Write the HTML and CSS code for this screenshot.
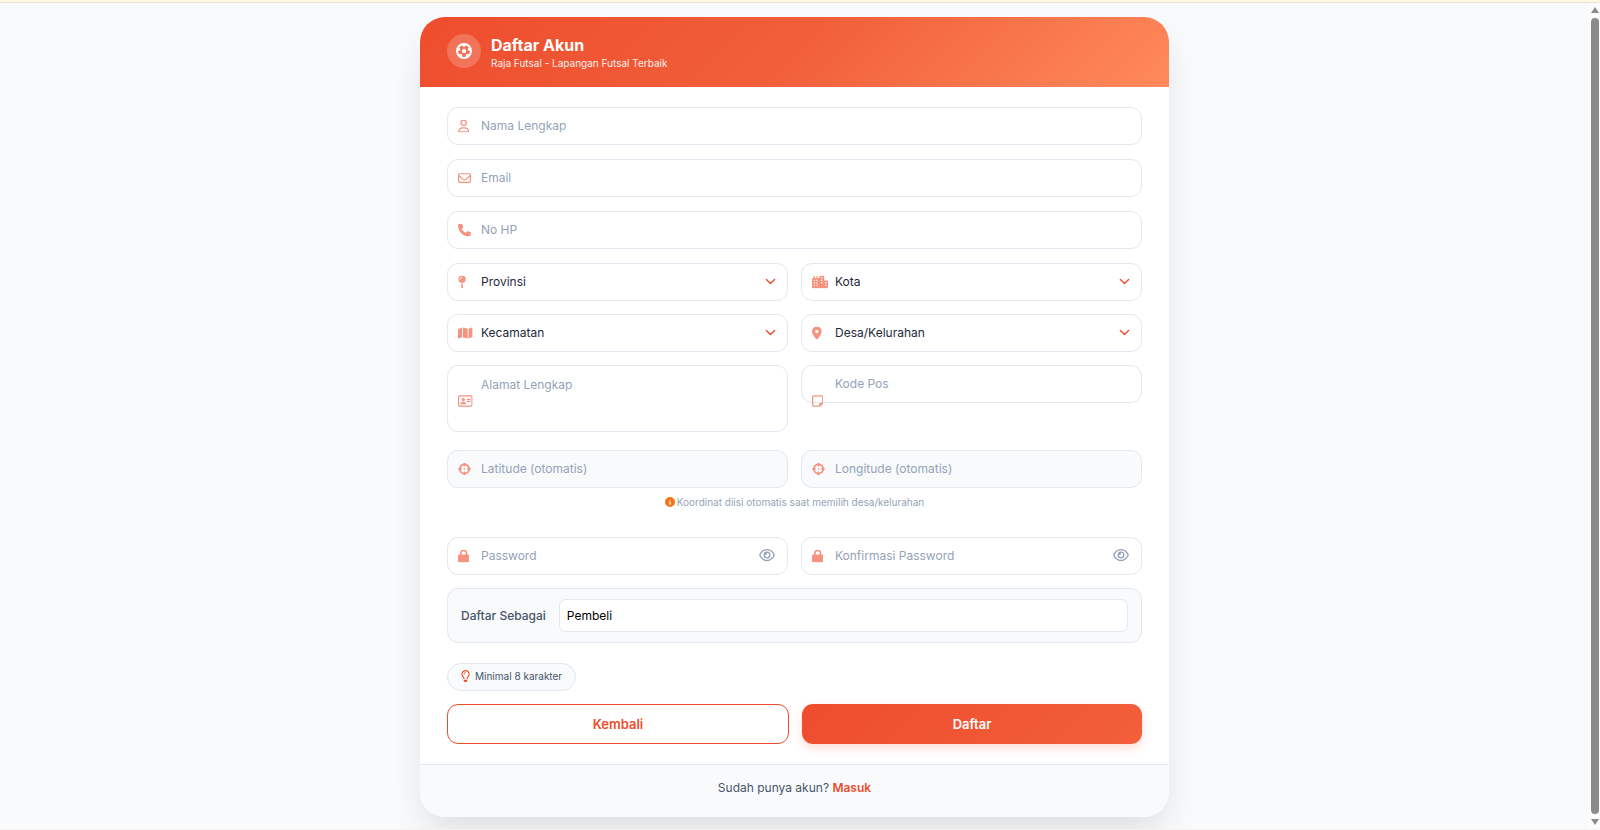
FILE: index.html
```html
<!DOCTYPE html>
<html lang="id">
<head>
    <meta charset="UTF-8">
    <meta name="viewport" content="width=device-width, initial-scale=1.0">
    <link rel="stylesheet" href="styles.css">
    <title>Daftar Akun</title>
</head>
<body>
    <!-- Icons -->
    <svg class="sprite" aria-hidden="true">
        <symbol id="futbol" viewBox="0 0 512 512"><path fill-rule="evenodd" d="M256 512A256 256 0 1 0 256 0a256 256 0 1 0 0 512zM417.3 360.1l-71.6-4.8c-5.2-.3-10.3 1.1-14.5 4.2s-7.2 7.4-8.4 12.5l-17.6 69.6C289.5 445.8 273 448 256 448s-33.5-2.2-49.2-6.4L189.2 372c-1.3-5-4.3-9.4-8.4-12.5s-9.3-4.5-14.5-4.2l-71.6 4.8c-17.6-27.2-28.5-59.2-30.4-93.6L125 228.3c4.4-2.8 7.6-7 9.2-11.9s1.4-10.2-.5-15l-26.7-66.6C128 109.2 155.3 89 186.9 76.9l55.2 46c4 3.3 9 5.1 14.1 5.1s10.2-1.8 14.1-5.1l55.2-46c31.6 12.1 58.9 32.3 79.9 57.9l-26.7 66.6c-1.9 4.8-2.1 10.1-.5 15s4.9 9.1 9.2 11.9l60.7 38.2c-1.9 34.4-12.8 66.4-30.4 93.6zM270.1 186.3c-8.4-6.1-19.8-6.1-28.2 0L194 221c-8.4 6.1-11.9 16.9-8.7 26.8l18.3 56.3c3.2 9.9 12.4 16.6 22.8 16.6h59.2c10.4 0 19.6-6.7 22.8-16.6l18.3-56.3c3.2-9.9-.3-20.7-8.7-26.8l-47.9-34.8z"/></symbol>
        <symbol id="user" viewBox="0 0 448 512"><path d="M304 128a80 80 0 1 0 -160 0 80 80 0 1 0 160 0zM96 128a128 128 0 1 1 256 0A128 128 0 1 1 96 128zM49.3 464H398.7c-8.9-63.3-63.3-112-129-112H178.3c-65.7 0-120.1 48.7-129 112zM0 482.3C0 383.8 79.8 304 178.3 304h91.4C368.2 304 448 383.8 448 482.3c0 16.4-13.3 29.7-29.7 29.7H29.7C13.3 512 0 498.7 0 482.3z"/></symbol>
        <symbol id="envelope" viewBox="0 0 512 512"><path d="M64 112c-8.8 0-16 7.2-16 16v22.1L220.5 291.7c20.7 17 50.4 17 71.1 0L464 150.1V128c0-8.8-7.2-16-16-16H64zM48 212.2V384c0 8.8 7.2 16 16 16H448c8.8 0 16-7.2 16-16V212.2L322 328.8c-38.4 31.5-93.7 31.5-132 0L48 212.2zM0 128C0 92.7 28.7 64 64 64H448c35.3 0 64 28.7 64 64V384c0 35.3-28.7 64-64 64H64c-35.3 0-64-28.7-64-64V128z"/></symbol>
        <symbol id="phone" viewBox="0 0 512 512"><path d="M164.9 24.6c-7.7-18.6-28-28.5-47.4-23.2l-88 24C12.1 30.2 0 46 0 64C0 311.4 200.6 512 448 512c18 0 33.8-12.1 38.6-29.5l24-88c5.3-19.4-4.6-39.7-23.2-47.4l-96-40c-16.3-6.8-35.2-2.1-46.3 11.6L304.7 368C234.3 334.7 177.3 277.7 144 207.3L193.3 167c13.7-11.2 18.4-30 11.6-46.3l-40-96z"/></symbol>
        <symbol id="pin" viewBox="0 0 320 512"><path d="M16 144a144 144 0 1 1 288 0A144 144 0 1 1 16 144zM160 80c8.8 0 16-7.2 16-16s-7.2-16-16-16c-53 0-96 43-96 96c0 8.8 7.2 16 16 16s16-7.2 16-16c0-35.3 28.7-64 64-64zM128 480V317.1c10.4 1.9 21.1 2.9 32 2.9s21.6-1 32-2.9V480c0 17.7-14.3 32-32 32s-32-14.3-32-32z"/></symbol>
        <symbol id="city" viewBox="0 0 640 512"><path fill-rule="evenodd" d="M480 48c0-26.5-21.5-48-48-48H336c-26.5 0-48 21.5-48 48V96H224V24c0-13.3-10.7-24-24-24s-24 10.7-24 24V96H112V24c0-13.3-10.7-24-24-24S64 10.7 64 24V96H48C21.5 96 0 117.5 0 144V464c0 26.5 21.5 48 48 48H592c26.5 0 48-21.5 48-48V240c0-26.5-21.5-48-48-48H480V48zM72 168h48v48H72zM168 168h48v48h-48zM72 264h48v48H72zM168 264h48v48h-48zM72 360h48v48H72zM168 360h48v48h-48zM360 72h48v48h-48zM360 168h48v48h-48zM360 264h48v48h-48zM520 264h48v48h-48zM520 360h48v48h-48z"/></symbol>
        <symbol id="map" viewBox="0 0 576 512"><path d="M384 476.1L192 421.2V35.9L384 90.8V476.1zm32-1.2V88.4L543.1 37.5c15.8-6.3 32.9 5.3 32.9 22.3V394.6c0 9.8-6 18.6-15.1 22.3L416 474.8zM15.1 95.1L160 37.2V423.6L32.9 474.5C17.1 480.8 0 469.2 0 452.2V117.4c0-9.8 6-18.6 15.1-22.3z"/></symbol>
        <symbol id="location" viewBox="0 0 384 512"><path d="M215.7 499.2C267 435 384 279.4 384 192C384 86 298 0 192 0S0 86 0 192c0 87.4 117 243 168.3 307.2c12.3 15.3 35.1 15.3 47.4 0zM192 128a64 64 0 1 1 0 128 64 64 0 1 1 0-128z"/></symbol>
        <symbol id="card" viewBox="0 0 576 512"><rect x="24" y="56" width="528" height="400" rx="40" fill="none" stroke="currentColor" stroke-width="48"/><circle cx="208" cy="200" r="64"/><path d="M96 373c0-47 38-85 85-85h54c47 0 85 38 85 85 0 6-5 11-11 11H107c-6 0-11-5-11-11z"/><path d="M368 192h112M368 272h112" stroke="currentColor" stroke-width="44" stroke-linecap="round"/></symbol>
        <symbol id="note" viewBox="0 0 448 512"><path d="M64 80c-8.8 0-16 7.2-16 16V416c0 8.8 7.2 16 16 16H288V352c0-17.7 14.3-32 32-32h80V96c0-8.8-7.2-16-16-16H64zM288 480H64c-35.3 0-64-28.7-64-64V96C0 60.7 28.7 32 64 32H384c35.3 0 64 28.7 64 64V320v5.5c0 17-6.7 33.3-18.7 45.3l-90.5 90.5c-12 12-28.3 18.7-45.3 18.7H288z"/></symbol>
        <symbol id="crosshairs" viewBox="0 0 512 512"><path d="M256 0c17.7 0 32 14.3 32 32V42.4c93.7 13.9 167.7 88 181.6 181.6H480c17.7 0 32 14.3 32 32s-14.3 32-32 32H469.6c-13.9 93.7-88 167.7-181.6 181.6V480c0 17.7-14.3 32-32 32s-32-14.3-32-32V469.6C130.3 455.7 56.3 381.7 42.4 288H32c-17.7 0-32-14.3-32-32s14.3-32 32-32H42.4C56.3 130.3 130.3 56.3 224 42.4V32c0-17.7 14.3-32 32-32zM107.4 288c12.5 58.3 58.4 104.1 116.6 116.6V384c0-17.7 14.3-32 32-32s32 14.3 32 32v20.6c58.3-12.5 104.1-58.4 116.6-116.6H384c-17.7 0-32-14.3-32-32s14.3-32 32-32h20.6C392.1 165.7 346.3 119.9 288 107.4V128c0 17.7-14.3 32-32 32s-32-14.3-32-32V107.4C165.7 119.9 119.9 165.7 107.4 224H128c17.7 0 32 14.3 32 32s-14.3 32-32 32H107.4zM256 224a32 32 0 1 1 0 64 32 32 0 1 1 0-64z"/></symbol>
        <symbol id="lock" viewBox="0 0 448 512"><path d="M144 144v48H304V144c0-44.2-35.8-80-80-80s-80 35.8-80 80zM80 192V144C80 64.5 144.5 0 224 0s144 64.5 144 144v48h16c35.3 0 64 28.7 64 64V448c0 35.3-28.7 64-64 64H64c-35.3 0-64-28.7-64-64V256c0-35.3 28.7-64 64-64H80z"/></symbol>
        <symbol id="eye" viewBox="0 0 576 512"><path d="M288 80c-65.2 0-118.8 29.6-159.9 67.7C89.6 183.5 63 226 49.4 256c13.6 30 40.2 72.5 78.6 108.3C169.2 402.4 222.8 432 288 432s118.8-29.6 159.9-67.7C486.4 328.5 513 286 526.6 256c-13.6-30-40.2-72.5-78.6-108.3C406.8 109.6 353.2 80 288 80zM95.4 112.6C142.5 68.8 207.2 32 288 32s145.5 36.8 192.6 80.6c46.8 43.5 78.1 95.4 93 131.1c3.3 7.9 3.3 16.7 0 24.6c-14.9 35.7-46.2 87.7-93 131.1C433.5 443.2 368.8 480 288 480s-145.5-36.8-192.6-80.6C48.6 356 17.3 304 2.5 268.3c-3.3-7.9-3.3-16.7 0-24.6C17.3 208 48.6 156 95.4 112.6zM288 336c44.2 0 80-35.8 80-80s-35.8-80-80-80c-.7 0-1.3 0-2 0c1.3 5.1 2 10.5 2 16c0 35.3-28.7 64-64 64c-5.5 0-10.9-.7-16-2c0 .7 0 1.3 0 2c0 44.2 35.8 80 80 80zm0-208a128 128 0 1 1 0 256 128 128 0 1 1 0-256z"/></symbol>
        <symbol id="info" viewBox="0 0 512 512"><path d="M256 512A256 256 0 1 0 256 0a256 256 0 1 0 0 512zM216 336h24V272H216c-13.3 0-24-10.7-24-24s10.7-24 24-24h48c13.3 0 24 10.7 24 24v88h8c13.3 0 24 10.7 24 24s-10.7 24-24 24H216c-13.3 0-24-10.7-24-24s10.7-24 24-24zm40-208a32 32 0 1 1 0 64 32 32 0 1 1 0-64z"/></symbol>
        <symbol id="bulb" viewBox="0 0 384 512"><path d="M297.2 248.9C311.6 228.3 320 203.2 320 176c0-70.7-57.3-128-128-128S64 105.3 64 176c0 27.2 8.4 52.3 22.8 72.9c3.7 5.3 8.1 11.3 12.8 17.7c12.9 17.7 28.3 38.9 39.8 59.8c10.4 19 15.7 38.8 18.3 57.5H109c-2.2-12-5.9-23.7-11.8-34.5c-9.9-18-22.2-34.9-34.5-51.8c-5.2-7.1-10.4-14.2-15.4-21.4C27.6 247.9 16 213.3 16 176C16 78.8 94.8 0 192 0s176 78.8 176 176c0 37.3-11.6 71.9-31.4 100.3c-5 7.2-10.2 14.3-15.4 21.4c-12.3 16.8-24.6 33.7-34.5 51.8c-5.9 10.8-9.6 22.5-11.8 34.5H226.4c2.6-18.7 7.9-38.6 18.3-57.5c11.5-20.9 26.9-42.1 39.8-59.8c4.7-6.4 9-12.4 12.7-17.7zM192 128c-26.5 0-48 21.5-48 48c0 8.8-7.2 16-16 16s-16-7.2-16-16c0-44.2 35.8-80 80-80c8.8 0 16 7.2 16 16s-7.2 16-16 16zm0 384c-44.2 0-80-35.8-80-80V416H272v16c0 44.2-35.8 80-80 80z"/></symbol>
        <symbol id="chevron" viewBox="0 0 16 16"><path d="M2 5l6 6 6-6" fill="none" stroke="currentColor" stroke-width="2" stroke-linecap="round" stroke-linejoin="round"/></symbol>
    </svg>

    <div class="top-strip"></div>
    <div class="page">
        <main class="content">
            <div class="register-card">
                <div class="card-header">
                    <div class="logo"><svg><use href="#futbol"/></svg></div>
                    <div>
                        <h1>Daftar Akun</h1>
                        <p>Raja Futsal - Lapangan Futsal Terbaik</p>
                    </div>
                </div>

                <form class="card-body">
                    <div class="field full">
                        <input type="text" id="nama" placeholder="Nama Lengkap" aria-label="Nama Lengkap">
                        <label class="icon" for="nama"><svg viewBox="0 0 448 512"><use href="#user"/></svg></label>
                    </div>
                    <div class="field full">
                        <input type="email" id="email" placeholder="Email" aria-label="Email">
                        <label class="icon" for="email"><svg viewBox="0 0 512 512"><use href="#envelope"/></svg></label>
                    </div>
                    <div class="field full">
                        <input type="tel" id="hp" placeholder="No HP" aria-label="No HP">
                        <label class="icon" for="hp"><svg viewBox="0 0 512 512"><use href="#phone"/></svg></label>
                    </div>

                    <div class="row">
                        <div class="field">
                            <select id="provinsi" aria-label="Provinsi"><option>Provinsi</option></select>
                            <label class="icon" for="provinsi"><svg viewBox="0 0 320 512"><use href="#pin"/></svg></label>
                            <svg class="arrow"><use href="#chevron"/></svg>
                        </div>
                        <div class="field">
                            <select id="kota" aria-label="Kota"><option>Kota</option></select>
                            <label class="icon" for="kota"><svg viewBox="0 0 640 512"><use href="#city"/></svg></label>
                            <svg class="arrow"><use href="#chevron"/></svg>
                        </div>
                    </div>
                    <div class="row">
                        <div class="field">
                            <select id="kecamatan" aria-label="Kecamatan"><option>Kecamatan</option></select>
                            <label class="icon" for="kecamatan"><svg viewBox="0 0 576 512"><use href="#map"/></svg></label>
                            <svg class="arrow"><use href="#chevron"/></svg>
                        </div>
                        <div class="field">
                            <select id="desa" aria-label="Desa/Kelurahan"><option>Desa/Kelurahan</option></select>
                            <label class="icon" for="desa"><svg viewBox="0 0 384 512"><use href="#location"/></svg></label>
                            <svg class="arrow"><use href="#chevron"/></svg>
                        </div>
                    </div>
                    <div class="row">
                        <div class="field address">
                            <textarea id="alamat" placeholder="Alamat Lengkap" aria-label="Alamat Lengkap"></textarea>
                            <label class="icon" for="alamat"><svg viewBox="0 0 576 512"><use href="#card"/></svg></label>
                        </div>
                        <div class="field">
                            <input type="text" id="kodepos" placeholder="Kode Pos" aria-label="Kode Pos">
                            <label class="icon" for="kodepos"><svg viewBox="0 0 448 512"><use href="#note"/></svg></label>
                        </div>
                    </div>
                    <div class="row coordinates">
                        <div class="field">
                            <input type="text" id="lat" placeholder="Latitude (otomatis)" aria-label="Latitude" readonly>
                            <label class="icon" for="lat"><svg viewBox="0 0 512 512"><use href="#crosshairs"/></svg></label>
                        </div>
                        <div class="field">
                            <input type="text" id="lng" placeholder="Longitude (otomatis)" aria-label="Longitude" readonly>
                            <label class="icon" for="lng"><svg viewBox="0 0 512 512"><use href="#crosshairs"/></svg></label>
                        </div>
                    </div>
                    <p class="hint"><svg><use href="#info"/></svg>Koordinat diisi otomatis saat memilih desa/kelurahan</p>
                    <div class="row">
                        <div class="field">
                            <input type="password" id="password" placeholder="Password" aria-label="Password">
                            <label class="icon" for="password"><svg viewBox="0 0 448 512"><use href="#lock"/></svg></label>
                            <button type="button" class="toggle" aria-label="Lihat password"><svg><use href="#eye"/></svg></button>
                        </div>
                        <div class="field">
                            <input type="password" id="konfirmasi" placeholder="Konfirmasi Password" aria-label="Konfirmasi Password">
                            <label class="icon" for="konfirmasi"><svg viewBox="0 0 448 512"><use href="#lock"/></svg></label>
                            <button type="button" class="toggle" aria-label="Lihat password"><svg><use href="#eye"/></svg></button>
                        </div>
                    </div>

                    <div class="role">
                        <label for="role">Daftar Sebagai</label>
                        <select id="role"><option>Pembeli</option></select>
                    </div>

                    <div class="requirement"><svg><use href="#bulb"/></svg>Minimal 8 karakter</div>

                    <div class="actions">
                        <button type="button" class="btn btn-back">Kembali</button>
                        <button type="submit" class="btn btn-submit">Daftar</button>
                    </div>
                </form>

                <div class="card-footer">Sudah punya akun? <a href="#">Masuk</a></div>
            </div>
        </main>

        <div class="scrollbar">
            <span class="scroll-up"></span>
            <span class="thumb"></span>
            <span class="scroll-down"></span>
        </div>
    </div>
</body>
</html>
```

FILE: styles.css
```css
* {
    box-sizing: border-box;
    margin: 0;
    padding: 0;
}

body {
    font-family: 'Inter', sans-serif;
    display: flex;
    flex-direction: column;
    height: 100vh;
    overflow: hidden;
    background-color: #f8fafc;
    color: #1e293b;
}

svg {
    display: block;
    fill: currentColor;
}

.sprite {
    display: none;
}

.top-strip {
    flex: none;
    height: 3px;
    background-color: #fff8e6;
    border-bottom: 1px solid #ece5d3;
}

.page {
    flex: 1;
    min-height: 0;
    display: flex;
    border-bottom: 1px solid #f3f3f3;
}

.content {
    flex: 1;
    padding: 14px;
    overflow: hidden;
}

.register-card {
    max-width: 749px;
    margin: 0 auto;
    background-color: #fff;
    border-radius: 25px;
    box-shadow: 0 18px 36px -6px rgba(0, 0, 0, 0.12);
}

/* Header */
.card-header {
    display: flex;
    align-items: flex-start;
    gap: 10px;
    padding: 17px 27px 16px;
    border-radius: 25px 25px 0 0;
    background: linear-gradient(135deg, #ee4d2d 0%, #f15f3a 50%, #ff8a5c 100%);
    color: #fff;
}

.logo {
    display: flex;
    align-items: center;
    justify-content: center;
    width: 34px;
    height: 34px;
    border-radius: 50%;
    background-color: rgba(255, 255, 255, 0.2);
}

.logo svg {
    width: 16px;
    height: 16px;
}

.card-header h1 {
    font-size: 16px;
    line-height: 22px;
    font-weight: 700;
}

.card-header p {
    font-size: 10px;
    line-height: 15px;
    opacity: 0.9;
}

/* Form */
.card-body {
    padding: 20px 27px;
}

.field {
    position: relative;
}

.full {
    margin-bottom: 14px;
}

.row {
    display: grid;
    grid-template-columns: 1fr 1fr;
    gap: 13px;
    margin-bottom: 13px;
}

.field input,
.field select,
.field textarea {
    display: block;
    width: 100%;
    height: 38px;
    padding: 0 33px 2px;
    border: 1px solid #e2e8f0;
    border-radius: 11px;
    background-color: #fff;
    font-family: inherit;
    font-size: 12px;
    color: #1e293b;
    outline: none;
    appearance: none;
}

.field textarea {
    height: 67px;
    padding-top: 10px;
    line-height: 17px;
    resize: none;
}

.address {
    padding-bottom: 5px;
}

.field input[readonly] {
    background-color: #f8fafc;
}

.field input::placeholder,
.field textarea::placeholder {
    color: #94a3b8;
}

.icon {
    position: absolute;
    top: 50%;
    left: 11px;
    transform: translateY(-50%);
    color: #ee4d2d;
    opacity: 0.6;
}

.icon svg {
    width: auto;
    height: 13px;
}

.arrow {
    position: absolute;
    top: 13px;
    right: 12px;
    width: 11px;
    height: 11px;
    color: #ee4d2d;
}

.toggle {
    position: absolute;
    top: 11px;
    right: 13px;
    border: none;
    background: none;
    color: #94a3b8;
    cursor: pointer;
}

.toggle svg {
    width: 16px;
    height: 14px;
}

.coordinates {
    margin-bottom: 7px;
}

.hint {
    display: flex;
    align-items: center;
    justify-content: center;
    gap: 2px;
    margin-bottom: 28px;
    font-size: 10px;
    line-height: 14px;
    color: #94a3b8;
}

.hint svg {
    width: 10px;
    height: 10px;
    color: #f97316;
}

.role {
    display: flex;
    align-items: center;
    gap: 13px;
    padding: 10px 13px;
    margin-bottom: 20px;
    border: 1px solid #e2e8f0;
    border-radius: 11px;
    background-color: #f8fafc;
}

.role label {
    font-size: 12px;
    font-weight: 500;
    color: #475569;
}

.role select {
    flex: 1;
    height: 33px;
    padding: 0 7px;
    border: 1px solid #e2e8f0;
    border-radius: 7px;
    background-color: #fff;
    font-family: inherit;
    font-size: 12px;
    color: #000;
    appearance: none;
}

.requirement {
    display: inline-flex;
    align-items: center;
    gap: 5px;
    height: 28px;
    padding: 0 13px 2px;
    margin-bottom: 13px;
    border: 1px solid #e2e8f0;
    border-radius: 14px;
    background-color: #f8fafc;
    font-size: 10px;
    color: #475569;
    vertical-align: top;
}

.requirement svg {
    width: 9px;
    height: 12px;
    color: #ee4d2d;
}

.actions {
    display: flex;
    gap: 13px;
}

.btn {
    flex: 1;
    height: 40px;
    border: none;
    border-radius: 11px;
    font-family: inherit;
    font-size: 13px;
    font-weight: 600;
    cursor: pointer;
}

.btn-back {
    border: 1px solid #ee4d2d;
    background-color: #fff;
    color: #ee4d2d;
}

.btn-submit {
    background: linear-gradient(135deg, #ee4d2d, #f25f3a);
    color: #fff;
    box-shadow: 0 4px 10px rgba(238, 77, 45, 0.2);
}

/* Footer */
.card-footer {
    padding: 14px 27px 21px;
    border-top: 1px solid #e2e8f0;
    border-radius: 0 0 25px 25px;
    background-color: #f8fafc;
    text-align: center;
    font-size: 12px;
    line-height: 17px;
    color: #475569;
}

.card-footer a {
    color: #ee4d2d;
    font-weight: 600;
    text-decoration: none;
}

/* Scrollbar */
.scrollbar {
    flex: none;
    display: flex;
    flex-direction: column;
    align-items: center;
    gap: 5px;
    width: 11px;
    padding: 4px 0;
    background-color: #fcfcfc;
}

.thumb {
    flex: 1;
    width: 8px;
    border-radius: 4px;
    background-color: #8b8b8b;
}

.scroll-up,
.scroll-down {
    border-left: 4px solid transparent;
    border-right: 4px solid transparent;
}

.scroll-up {
    border-bottom: 6px solid #8b8b8b;
}

.scroll-down {
    border-top: 6px solid #8b8b8b;
}
```
